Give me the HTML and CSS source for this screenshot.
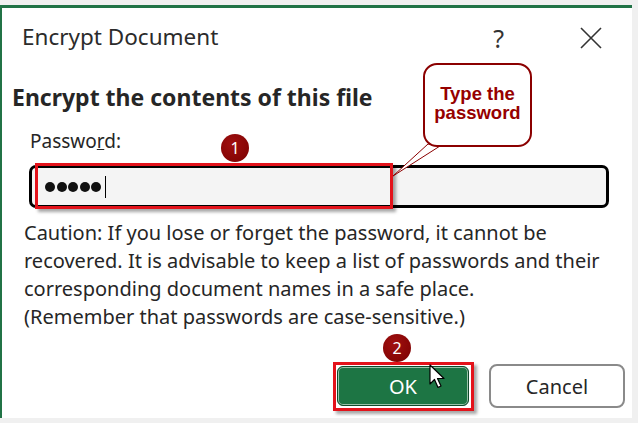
FILE: index.html
```html
<!DOCTYPE html>
<html lang="en">
  <head>
    <meta charset="UTF-8" />
    <meta name="viewport" content="width=device-width, initial-scale=1.0" />
    <title>Encrypt Document</title>
    <link rel="stylesheet" href="styles.css">
  </head>
  <body>
    <div class="dialog">
      <header class="title-bar">
        <span class="title">Encrypt Document</span>
        <div class="title-actions">
          <span class="help">?</span>
          <svg class="close" width="22" height="22" viewBox="0 0 22 22">
            <path d="M1 1 L21 21 M21 1 L1 21" stroke="#333" stroke-width="1.6" fill="none" />
          </svg>
        </div>
      </header>

      <main class="content">
        <h2 class="heading">Encrypt the contents of this file</h2>
        <label class="field-label">Passwo<u>r</u>d:</label>
        <div class="password-input">
          <span class="dot"></span>
          <span class="dot"></span>
          <span class="dot"></span>
          <span class="dot"></span>
          <span class="dot"></span>
          <span class="caret"></span>
        </div>
        <p class="caution">
          Caution: If you lose or forget the password, it cannot be
          recovered. It is advisable to keep a list of passwords and their
          corresponding document names in a safe place.<br />
          (Remember that passwords are case-sensitive.)
        </p>
        <div class="actions">
          <button class="btn btn-ok">OK</button>
          <button class="btn btn-cancel">Cancel</button>
        </div>
      </main>

      <!-- tutorial markup on top of the dialog -->
      <div class="highlight highlight-input"></div>
      <div class="highlight highlight-ok"></div>
      <span class="badge badge-1">1</span>
      <span class="badge badge-2">2</span>
      <svg class="callout-tail" width="50" height="34" viewBox="0 0 50 34">
        <polygon points="35,0 47,2 0,32" fill="#fff" stroke="#8b0000" stroke-width="1" />
      </svg>
      <div class="callout">Type the<br />password</div>
      <svg class="pointer" width="18" height="26" viewBox="0 0 18 26">
        <path d="M1 1 L1 20 L5.5 15.5 L9 23.5 L12 22 L8.5 14.5 L15 14.5 Z" fill="#fff" stroke="#000" stroke-width="1.2" stroke-linejoin="round" />
      </svg>
    </div>
  </body>
</html>
```

FILE: styles.css
```css
body {
  font-family: "Noto Sans", "Open Sans", sans-serif;
  background-color: #f0f0f0;
  color: #262626;
  margin: 0;
  padding: 0;
}

.dialog {
  position: relative;
  box-sizing: border-box;
  height: 413px;
  margin: 5px 6px 0 0;
  background-color: #fff;
  border-top: 3px solid #217346;
  border-left: 2px solid #217346;
}

.title-bar {
  display: flex;
  justify-content: space-between;
  align-items: flex-start;
  height: 74px;
  padding: 0 30px 0 20px;
  box-sizing: border-box;
}

.title {
  font-size: 22.5px;
  line-height: 30px;
  margin-top: 14px;
  color: #2b2b2b;
}

.title-actions {
  display: flex;
  align-items: center;
  gap: 76px;
  margin-top: 17px;
}

.help {
  font-size: 25px;
  line-height: 26px;
  color: #333;
}

.content {
  padding: 0 7px 0 0;
}

.heading {
  font-size: 23px;
  font-weight: bold;
  line-height: 30px;
  margin: 0 0 0 10px;
  color: #262626;
}

.field-label {
  display: block;
  font-size: 19px;
  line-height: 26px;
  margin: 16px 0 0 28px;
}

.password-input {
  display: flex;
  align-items: center;
  gap: 1.5px;
  box-sizing: border-box;
  width: 580px;
  height: 43px;
  margin: 11px 0 0 27px;
  padding-left: 13px;
  background-color: #f4f4f4;
  border: 3px solid #000;
  border-radius: 7px;
}

.dot {
  width: 10px;
  height: 10px;
  border-radius: 50%;
  background-color: #111;
}

.caret {
  width: 1.5px;
  height: 22px;
  margin-left: 2px;
  background-color: #000;
}

.caution {
  font-size: 20px;
  line-height: 28px;
  margin: 11px 0 0 22px;
  width: 595px;
}

.actions {
  display: flex;
  justify-content: flex-end;
  align-items: center;
  gap: 20px;
  margin-top: 33px;
}

.btn {
  font-family: inherit;
  font-size: 20px;
  border-radius: 6px;
  cursor: pointer;
}

.btn-ok {
  width: 132px;
  height: 40px;
  color: #fff;
  background-color: #1d7544;
  border: 1px solid #0f4a2a;
  box-shadow: inset 0 0 0 1px rgba(255, 255, 255, 0.55);
}

.btn-cancel {
  width: 136px;
  height: 44px;
  color: #262626;
  background-color: #fff;
  border: 2px solid #8a8a8a;
  border-radius: 8px;
}

.highlight {
  position: absolute;
  box-sizing: border-box;
  border: 3px solid #e3131b;
  box-shadow: 3px 3px 3px rgba(0, 0, 0, 0.35);
}

.highlight-input {
  left: 33px;
  top: 155px;
  width: 358px;
  height: 46px;
}

.highlight-ok {
  left: 331px;
  top: 354px;
  width: 141px;
  height: 49px;
}

.badge {
  position: absolute;
  width: 28px;
  height: 28px;
  border-radius: 50%;
  background: radial-gradient(circle at 40% 35%, #a01010, #7a0000);
  color: #fff;
  font-size: 16px;
  line-height: 28px;
  text-align: center;
}

.badge-1 {
  left: 219px;
  top: 126px;
}

.badge-2 {
  left: 381px;
  top: 326px;
}

.callout {
  position: absolute;
  left: 421px;
  top: 55px;
  width: 109px;
  height: 84px;
  box-sizing: border-box;
  padding-top: 19px;
  border: 2px solid #8b0000;
  border-radius: 14px;
  background-color: #fff;
  color: #960000;
  font-family: "Liberation Sans", Arial, sans-serif;
  font-weight: bold;
  font-size: 18.5px;
  line-height: 19px;
  text-align: center;
}

.callout-tail {
  position: absolute;
  left: 391px;
  top: 136px;
}

.pointer {
  position: absolute;
  left: 427px;
  top: 356px;
}
```
